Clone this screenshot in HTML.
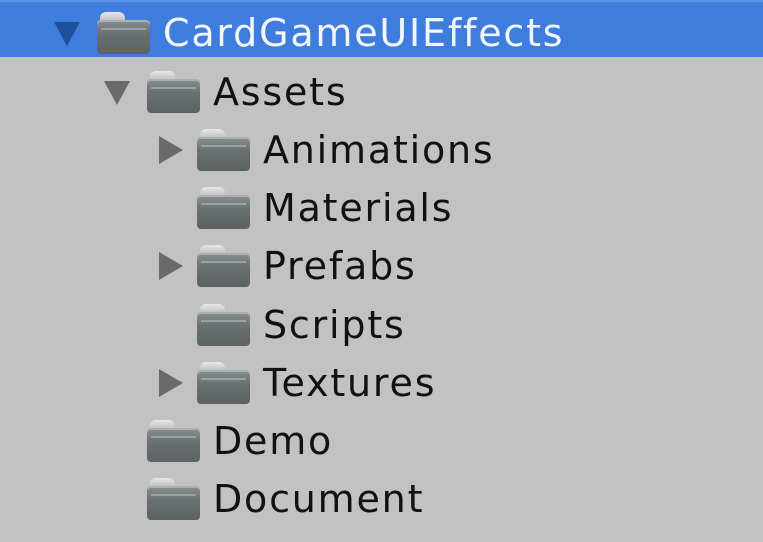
<!DOCTYPE html><html><head><style>
body{margin:0;width:763px;height:542px;background:#c2c2c2;overflow:hidden;position:relative;font-family:"DejaVu Sans","Liberation Sans",sans-serif}
.sel{position:absolute;left:0;top:0;width:763px;height:57px;background:#3e7ddd;border-top:2px solid #5a93e6;box-sizing:border-box}
.row{position:absolute;height:58px}
.t{position:absolute;font-size:38px;line-height:58px;top:0;color:#111;white-space:nowrap;letter-spacing:1.8px}
.tri{position:absolute;top:16px;width:0;height:0}
.down{border-left:13px solid transparent;border-right:13px solid transparent;border-top:24px solid #6a6a6a;top:18px}
.right{border-top:14px solid transparent;border-bottom:14px solid transparent;border-left:24px solid #6a6a6a;top:15px}
.f{position:absolute;top:8px;width:53px;height:42px}
.tab{position:absolute;left:3px;top:0;width:25px;height:14px;border-radius:6px 6px 0 0;background:linear-gradient(#e8e8e8,#a8a8a8)}
.bod{position:absolute;left:0;top:8px;width:53px;height:34px;border-radius:4px;background:linear-gradient(#8a9193,#6a7173 40%,#5c6264);box-shadow:inset 0 2px 0 #a9b0b2}
.bod:after{content:"";position:absolute;left:4px;right:4px;top:8px;height:2px;background:#9aa1a3}
</style></head><body>
<div class="sel"></div>
<div class="row" style="top:4px;left:0;width:763px">
<div class="tri down" style="left:54px;border-top-color:#1f4f9a"></div>
<div class="f" style="left:97px"><div class="tab"></div><div class="bod"></div></div>
<div class="t" style="left:163px;color:#f2f6ff">CardGameUIEffects</div></div>

<div class="row" style="top:63px;left:0">
<div class="tri down" style="left:104px"></div>
<div class="f" style="left:147px"><div class="tab"></div><div class="bod"></div></div>
<div class="t" style="left:213px">Assets</div></div>

<div class="row" style="top:121px;left:0">
<div class="tri right" style="left:159px"></div>
<div class="f" style="left:197px"><div class="tab"></div><div class="bod"></div></div>
<div class="t" style="left:263px">Animations</div></div>

<div class="row" style="top:179px;left:0">
<div class="f" style="left:197px"><div class="tab"></div><div class="bod"></div></div>
<div class="t" style="left:263px">Materials</div></div>

<div class="row" style="top:237px;left:0">
<div class="tri right" style="left:159px"></div>
<div class="f" style="left:197px"><div class="tab"></div><div class="bod"></div></div>
<div class="t" style="left:263px">Prefabs</div></div>

<div class="row" style="top:296px;left:0">
<div class="f" style="left:197px"><div class="tab"></div><div class="bod"></div></div>
<div class="t" style="left:263px">Scripts</div></div>

<div class="row" style="top:354px;left:0">
<div class="tri right" style="left:159px"></div>
<div class="f" style="left:197px"><div class="tab"></div><div class="bod"></div></div>
<div class="t" style="left:263px">Textures</div></div>

<div class="row" style="top:412px;left:0">
<div class="f" style="left:147px"><div class="tab"></div><div class="bod"></div></div>
<div class="t" style="left:213px">Demo</div></div>

<div class="row" style="top:470px;left:0">
<div class="f" style="left:147px"><div class="tab"></div><div class="bod"></div></div>
<div class="t" style="left:213px">Document</div></div>
</body></html>
